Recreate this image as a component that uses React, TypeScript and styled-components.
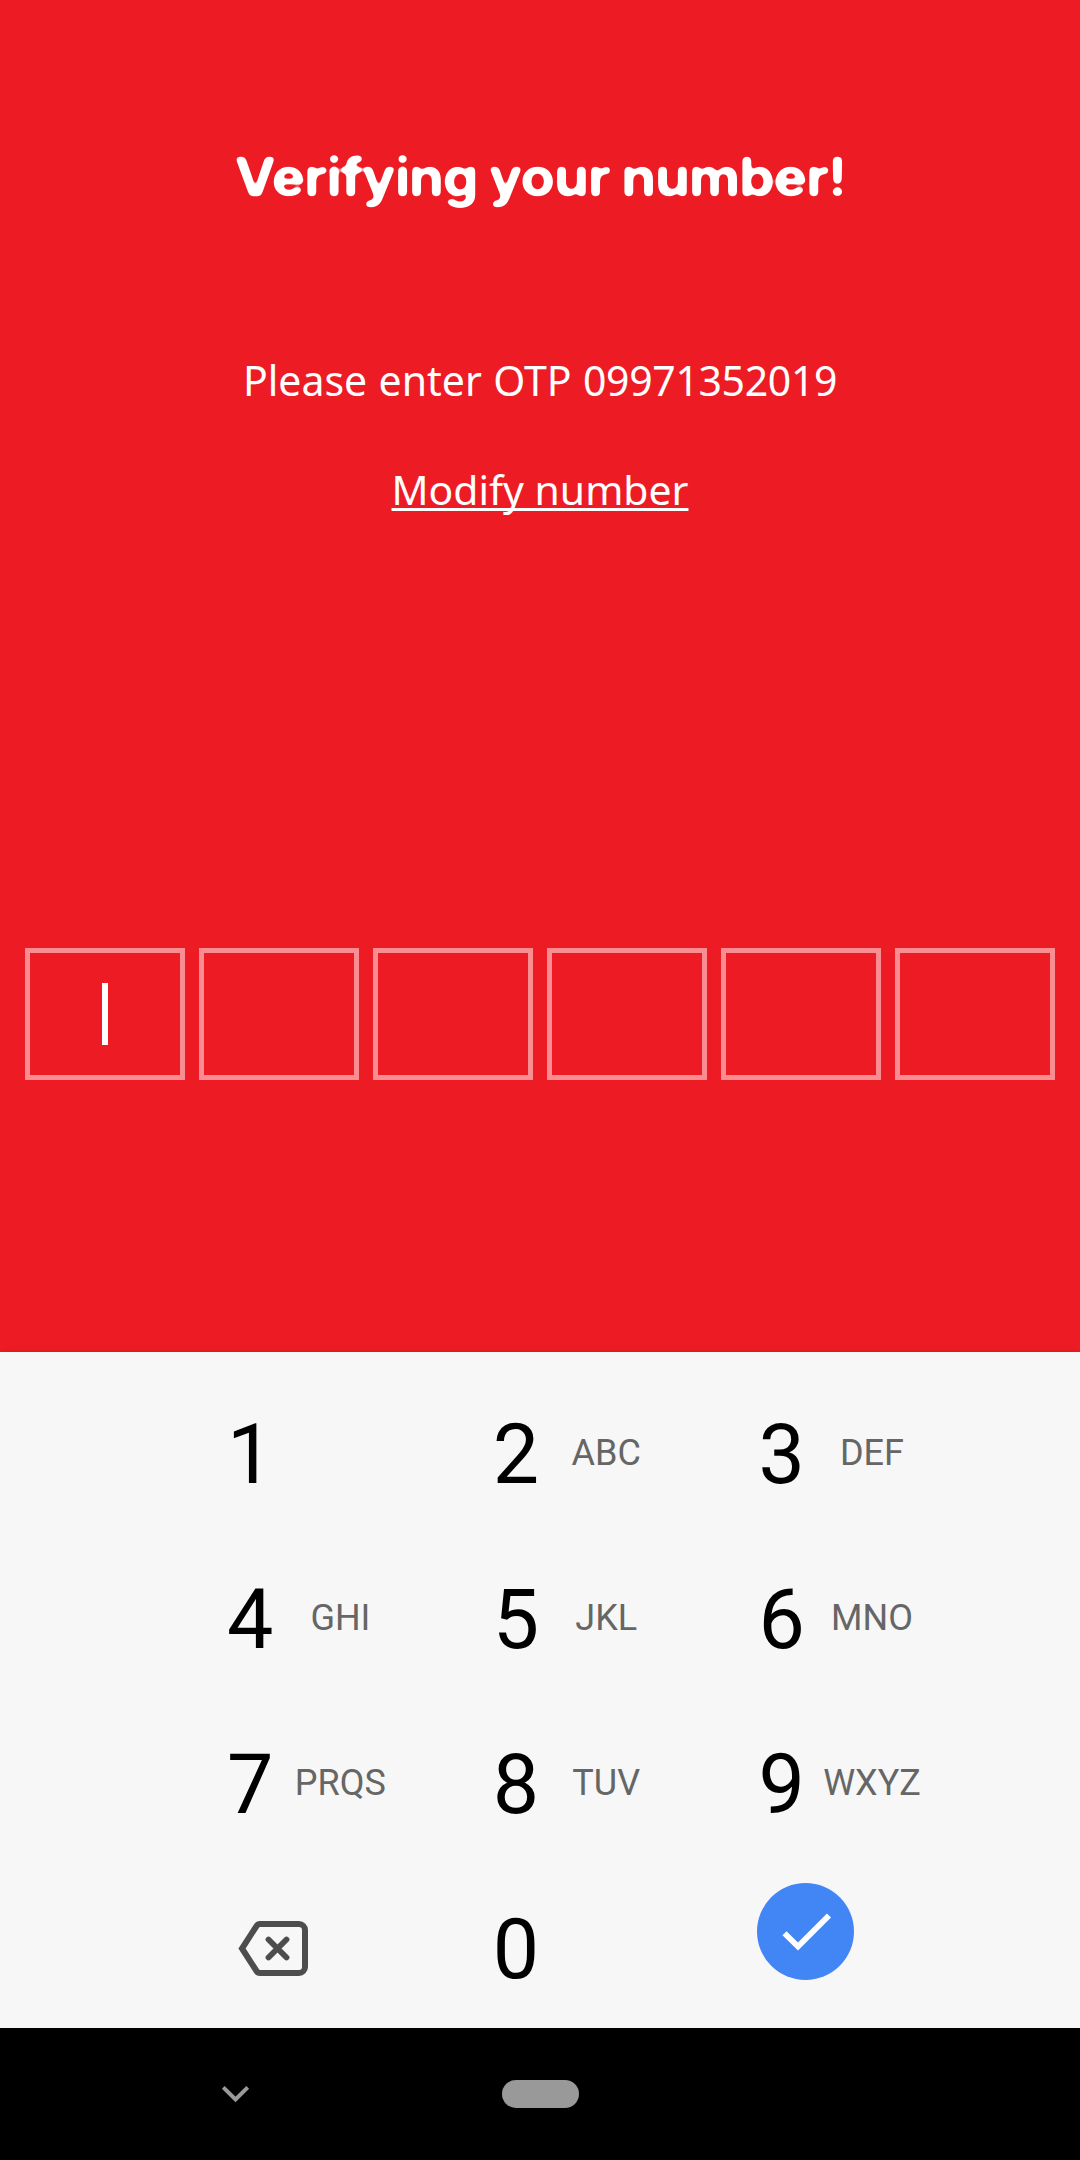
import React from 'react';
import styled, { createGlobalStyle } from 'styled-components';

const GlobalStyle = createGlobalStyle`
  * { box-sizing: border-box; }
  body { margin: 0; background: #000; }
`;

const Screen = styled.div`
  width: 1080px;
  height: 2160px;
  display: flex;
  flex-direction: column;
  overflow: hidden;
`;

const Content = styled.main`
  height: 1352px;
  background: #ed1c24;
  display: flex;
  flex-direction: column;
  align-items: center;
  padding-top: 142px;
  color: #fff;
`;

const Title = styled.h1`
  margin: 0;
  height: 70px;
  font: 700 53px/70px Inter, sans-serif;
  letter-spacing: -0.9px;
  word-spacing: -1px;
  white-space: nowrap;
  transform: scaleX(1.058);
  filter: url(#soft-corners);
`;

const Message = styled.p`
  margin: 138px 0 0;
  font: 400 41px/60px 'Noto Sans', sans-serif;
  word-spacing: 0.7px;
  white-space: nowrap;
`;

const Phone = styled.span`
  letter-spacing: -0.35px;
`;

const ModifyLink = styled.a`
  margin-top: 49px;
  font: 400 40.9px/60px 'Noto Sans', sans-serif;
  text-decoration: underline;
  text-decoration-thickness: 2.5px;
  text-underline-offset: 3px;
  text-decoration-skip-ink: none;
  white-space: nowrap;
`;

const CodeRow = styled.div`
  margin-top: 429px;
  display: flex;
  gap: 14px;
`;

const CodeBox = styled.div`
  width: 160px;
  height: 132px;
  border: 5px solid #f98d92;
  display: flex;
  align-items: center;
  justify-content: center;
`;

const Caret = styled.span`
  width: 6px;
  height: 62px;
  background: #fff;
`;

const Keyboard = styled.section`
  position: relative;
  height: 676px;
  background: #f7f7f7;
  box-shadow: 0 0 6px rgba(0, 0, 0, 0.12);
  padding: 20px 0 0 227px;
  display: grid;
  grid-template-columns: repeat(3, 265.8px);
  grid-template-rows: repeat(4, 165px);
`;

const Key = styled.div`
  display: flex;
  align-items: center;
`;

const Digit = styled.span`
  width: 46.4px;
  font: 400 82.5px/165px Roboto, sans-serif;
  color: #000;
`;

const Letters = styled.span`
  width: 134px;
  padding-bottom: 3px;
  text-align: center;
  font: 400 36px/42px Roboto, sans-serif;
  color: #666;
`;

const DeleteKey = styled.div`
  padding: 53px 0 0 10.5px;
  svg { display: block; }
`;

const DoneKey = styled.div`
  width: 97px;
  height: 97px;
  margin: 16px 0 0 -1.6px;
  border-radius: 50%;
  background: #4285f4;
  svg { display: block; }
`;

const NavBar = styled.nav`
  height: 132px;
  background: #000;
  display: flex;
  padding: 52px 0 0 221px;
`;

const Chevron = styled.svg`
  display: block;
  margin-right: 252px;
`;

const HomePill = styled.div`
  width: 77px;
  height: 28px;
  border-radius: 14px;
  background: #999;
`;

const CornerFilter = styled.svg`
  position: absolute;
  width: 0;
  height: 0;
`;

const keys: [string, string][] = [
  ['1', ''], ['2', 'ABC'], ['3', 'DEF'],
  ['4', 'GHI'], ['5', 'JKL'], ['6', 'MNO'],
  ['7', 'PRQS'], ['8', 'TUV'], ['9', 'WXYZ'],
];

export default function App() {
  return (
    <Screen>
      <GlobalStyle />
      <CornerFilter aria-hidden="true">
        <filter id="soft-corners" x="-5%" y="-10%" width="110%" height="120%" colorInterpolationFilters="sRGB">
          <feGaussianBlur stdDeviation="2" />
          <feComponentTransfer>
            <feFuncR type="linear" slope="0" intercept="1" />
            <feFuncG type="linear" slope="0" intercept="1" />
            <feFuncB type="linear" slope="0" intercept="1" />
            <feFuncA type="linear" slope="6" intercept="-2.2" />
          </feComponentTransfer>
        </filter>
      </CornerFilter>
      <Content>
        <Title>Verifying your number!</Title>
        <Message>Please enter OTP <Phone>09971352019</Phone></Message>
        <ModifyLink>Modify number</ModifyLink>
        <CodeRow>
          {[0, 1, 2, 3, 4, 5].map((i) => (
            <CodeBox key={i}>{i === 0 && <Caret />}</CodeBox>
          ))}
        </CodeRow>
      </Content>
      <Keyboard>
        {keys.map(([digit, letters]) => (
          <Key key={digit}>
            <Digit>{digit}</Digit>
            {letters && <Letters>{letters}</Letters>}
          </Key>
        ))}
        <DeleteKey>
          <svg width="72" height="58" viewBox="0 0 72 58" fill="none" stroke="#4d4d4d">
            <path d="M21.5 4H61a6 6 0 0 1 6 6V47a6 6 0 0 1-6 6H22a4 4 0 0 1-3.4-1.9L4 28.5 18.6 5.9A4 4 0 0 1 21.5 4Z" strokeWidth="6" />
            <path d="M30.5 19.5 48.5 37.5M48.5 19.5 30.5 37.5" strokeWidth="5.8" strokeLinecap="round" />
          </svg>
        </DeleteKey>
        <Key>
          <Digit>0</Digit>
        </Key>
        <DoneKey>
          <svg width="97" height="97" viewBox="0 0 97 97" fill="none" stroke="#fff" strokeWidth="5.8">
            <path d="M27.5 50.2 41 63.5 72 32.5" />
          </svg>
        </DoneKey>
      </Keyboard>
      <NavBar>
        <Chevron width="29" height="28" viewBox="0 0 29 28" fill="none" stroke="#999" strokeWidth="4">
          <path d="M2.3 7.3 14.5 19.5 26.7 7.3" />
        </Chevron>
        <HomePill />
      </NavBar>
    </Screen>
  );
}
